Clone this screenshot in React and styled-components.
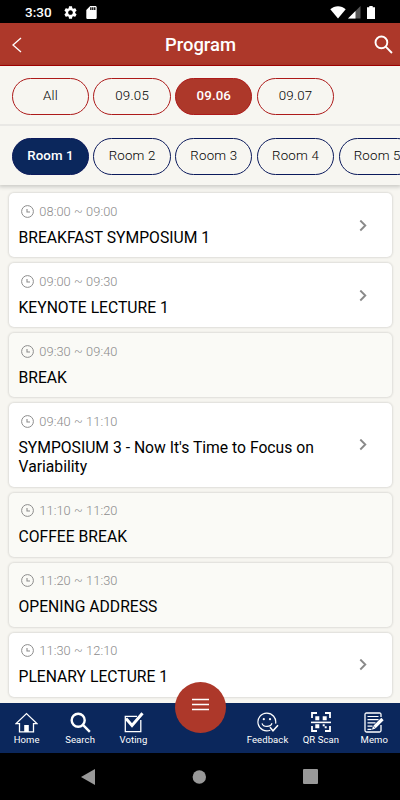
import styled, { createGlobalStyle } from 'styled-components'

const GlobalStyle = createGlobalStyle`
  * {
    box-sizing: border-box;
  }
  body {
    margin: 0;
    background: #000;
    font-family: Roboto, "Liberation Sans", sans-serif;
    overflow: hidden;
  }
  svg {
    display: block;
    flex-shrink: 0;
  }
`;

const Phone = styled.div`
  width: 400px;
  height: 800px;
  display: flex;
  flex-direction: column;
  overflow: hidden;
  background: #f7f6f1;
`;

const StatusBar = styled.div`
  height: 23px;
  flex-shrink: 0;
  display: flex;
  align-items: center;
  padding: 1px 25px 0 25px;
  background: #000;
  color: #fff;
`;

const StatusTime = styled.span`
  width: 38.5px;
  font-size: 13.5px;
  font-weight: 500;
`;

const StatusIcons = styled.div`
  display: flex;
  align-items: center;
  gap: ${({ $gap }) => $gap}px;
`;

const Spacer = styled.div`
  flex: 1;
`;

const Header = styled.header`
  height: 43px;
  flex-shrink: 0;
  display: flex;
  align-items: center;
  justify-content: space-between;
  padding: 0 7px 0 11px;
  background: #ad382a;
  border-bottom: 1px solid #ac0000;
  color: #fff;
`;

const HeaderTitle = styled.h1`
  margin: 0;
  font-size: 18.4px;
  font-weight: 500;
`;

const HeaderSide = styled.div`
  width: ${({ $end }) => ($end ? 26 : 23)}px;
  display: flex;
  justify-content: ${({ $end }) => ($end ? 'flex-end' : 'flex-start')};
  padding-top: 1px;
`;

const Filters = styled.div`
  position: relative;
  flex-shrink: 0;
  box-shadow: 0 1px 4px 1px rgba(0, 0, 0, 0.18);
`;

const FilterRow = styled.div`
  height: ${({ $height }) => $height}px;
  display: flex;
  gap: 4.4px;
  padding: 12px 0 0 11.8px;
  overflow: hidden;
  border-bottom: ${({ $divided }) => ($divided ? '2px solid #e9e8e5' : 'none')};
`;

const Pill = styled.div`
  width: 77.3px;
  height: 37px;
  flex-shrink: 0;
  display: flex;
  align-items: center;
  justify-content: center;
  padding-bottom: 2px;
  border: 1px solid ${({ $line }) => $line};
  border-radius: 19px;
  background: ${({ $active, $fill }) => ($active ? $fill : 'transparent')};
  color: ${({ $active }) => ($active ? '#fff' : '#000')};
  font-size: 13.3px;
  font-weight: ${({ $active }) => ($active ? 500 : 300)};
  letter-spacing: ${({ $active }) => ($active ? 0.1 : 0.2)}px;
`;

const List = styled.main`
  flex: 1;
  min-height: 0;
  display: flex;
  flex-direction: column;
  gap: 6px;
  padding: 8.4px 8px 0 9px;
  overflow: hidden;
`;

const Card = styled.article`
  flex-shrink: 0;
  min-height: 64px;
  display: flex;
  align-items: center;
  justify-content: space-between;
  padding: 10.5px 25px 9.5px 9.5px;
  border-radius: 5px;
  background: ${({ $muted }) => ($muted ? '#fafaf6' : '#fff')};
  box-shadow: 0 0 2px 1px rgba(0, 0, 0, 0.1);
`;

const CardTime = styled.div`
  display: flex;
  align-items: center;
  gap: 5.8px;
  height: 15px;
  padding-left: 2px;
  color: #8c8c8c;
  font-size: 12.8px;
  font-weight: 300;
  letter-spacing: 0.08px;
`;

const CardTitle = styled.div`
  width: 310px;
  margin-top: 9px;
  color: #000;
  font-size: 15.7px;
  font-weight: 400;
  line-height: 19.6px;
`;

const TabBar = styled.nav`
  position: relative;
  height: 50px;
  flex-shrink: 0;
  display: flex;
  justify-content: space-between;
  margin-right: -1px;
  background: #0b275c;
  color: #fff;
`;

const TabGroup = styled.div`
  display: flex;
`;

const Tab = styled.div`
  width: 53.4px;
  display: flex;
  flex-direction: column;
  align-items: center;
  padding-top: 8.5px;
  font-size: 9.5px;
  line-height: 12px;
  letter-spacing: 0.1px;
  white-space: nowrap;
`;

const TabIcon = styled.div`
  height: 22px;
`;

const MenuButton = styled.div`
  position: absolute;
  left: 174.700px;
  top: -21.500px;
  width: 51px;
  height: 51px;
  display: flex;
  align-items: center;
  justify-content: center;
  padding-bottom: 5px;
  border-radius: 50%;
  background: #ad382a;
`;

const SystemBar = styled.div`
  height: 47px;
  flex-shrink: 0;
  display: flex;
  align-items: center;
  justify-content: space-between;
  padding: 0 82px 0 81px;
  background: #000;
`;

const GearIcon = () => (
  <svg width="13" height="13" viewBox="2 2 20 20" fill="#fff">
    <path d="M19.14 12.94c.04-.3.06-.61.06-.94 0-.32-.02-.64-.07-.94l2.03-1.58c.18-.14.23-.41.12-.61l-1.92-3.32c-.12-.22-.37-.29-.59-.22l-2.39.96c-.5-.38-1.03-.7-1.62-.94l-.36-2.54c-.04-.24-.24-.41-.48-.41h-3.84c-.24 0-.43.17-.47.41l-.36 2.54c-.59.24-1.13.57-1.62.94l-2.39-.96c-.22-.08-.47 0-.59.22L2.74 8.87c-.12.21-.08.47.12.61l2.03 1.58c-.05.3-.09.63-.09.94s.02.64.07.94l-2.03 1.58c-.18.14-.23.41-.12.61l1.92 3.32c.12.22.37.29.59.22l2.39-.96c.5.38 1.03.7 1.62.94l.36 2.54c.05.24.24.41.48.41h3.84c.24 0 .44-.17.47-.41l.36-2.54c.59-.24 1.13-.56 1.62-.94l2.39.96c.22.08.47 0 .59-.22l1.92-3.32c.12-.22.07-.47-.12-.61l-2.01-1.58zM12 15.6c-1.98 0-3.6-1.62-3.6-3.6s1.62-3.6 3.6-3.6 3.6 1.62 3.6 3.6-1.62 3.6-3.6 3.6z" />
  </svg>
)

const SdCardIcon = () => (
  <svg width="11" height="13" viewBox="4 2 16 20" fill="#fff">
    <path d="M18 2h-8L4.02 8 4 20c0 1.100.9 2 2 2h12c1.100 0 2-.9 2-2V4c0-1.100-.9-2-2-2zm-6 6h-2V4h2v4zm3 0h-2V4h2v4zm3 0h-2V4h2v4z" />
  </svg>
)

const WifiIcon = () => (
  <svg width="16" height="13" viewBox="0 0 16 13" fill="#fff">
    <path d="M0.300 3.200C4.700-.7 11.300-.7 15.700 3.200L8 12.600Z" />
  </svg>
)

const SignalIcon = () => (
  <svg width="13" height="13" viewBox="0 0 13 13">
    <path d="M12.500 0V12.500H0Z" fill="#555" />
    <path d="M7.500 5V12.500H0Z" fill="#fff" />
  </svg>
)

const BatteryIcon = () => (
  <svg width="8" height="13" viewBox="0 0 8 13" fill="#fff">
    <path d="M2.300 0h3.400v1.300H8V13H0V1.300h2.300Z" />
  </svg>
)

const BackIcon = () => (
  <svg width="12" height="16" viewBox="0 0 12 16" fill="none" stroke="#fff" strokeWidth="1.300">
    <path d="M10 1 2 8l8 7" />
  </svg>
)

const SearchIcon = ({ size, weight }) => (
  <svg width={size} height={size} viewBox="0 0 20 20" fill="none" stroke="#fff" strokeWidth={weight}>
    <circle cx="7.800" cy="7.800" r="6.200" />
    <path d="m12.300 12.300 6.600 6.600" />
  </svg>
)

const ClockIcon = () => (
  <svg width="13" height="13" viewBox="0 0 13 13" fill="none" stroke="#8c8c8c" strokeWidth="1">
    <circle cx="6.500" cy="6.500" r="5.900" />
    <path d="M6 4v3h3" strokeWidth="1.100" />
  </svg>
)

const ChevronIcon = () => (
  <svg width="8" height="12" viewBox="0 0 8 12" fill="none" stroke="#8a8a8a" strokeWidth="1.900">
    <path d="m1.300 .5 5 5-5 5" />
  </svg>
)

const HomeIcon = () => (
  <svg width="23" height="21" viewBox="0 0 23 21" fill="none" stroke="#fff" strokeWidth="1.300">
    <path d="M4.500 11.600H1.100L11.500 1.600 21.900 11.600H18.500V19.800H4.500Z" />
    <path d="M9.200 13h4.600v7H9.200Z" fill="#fff" stroke="none" />
  </svg>
)

const VotingIcon = () => (
  <svg width="21" height="21" viewBox="0 0 21 21" fill="none" stroke="#fff">
    <path d="M14 4.300H2.300V19.600H17.800V8" strokeWidth="1.300" />
    <path d="m3 6.600 6 6.800L19.500 1.300" strokeWidth="3" />
  </svg>
)

const FeedbackIcon = () => (
  <svg width="22" height="21" viewBox="0 0 22 21" fill="none" stroke="#fff" strokeWidth="1.200">
    <path d="M13.300 18.200A8.900 8.900 0 1 1 18.600 11.600" />
    <path d="M5 11.300c1.200 4.200 8.700 4.200 10 0" />
    <path d="m13 15.300 3 3.500 5-5.600" strokeWidth="1.500" />
    <circle cx="6.800" cy="7.200" r="1.100" fill="#fff" stroke="none" />
    <circle cx="13" cy="7.200" r="1.100" fill="#fff" stroke="none" />
  </svg>
)

const QrIcon = () => (
  <svg width="20" height="20" viewBox="0 0 20 20" fill="none" stroke="#fff" strokeWidth="1.800">
    <path d="M1 6V1h5M14 1h5v5M19 14v5h-5M6 19H1v-5" />
    <path d="M0 10.400h20" strokeWidth="1.600" />
    <path d="M4.300 4.200h4v4h-4ZM11.700 4.200h4v4h-4ZM4.300 12.200h4v4h-4ZM11.700 12.200h2v2h-2ZM13.700 14.200h2v2h-2Z" fill="#fff" stroke="none" />
  </svg>
)

const MemoIcon = () => (
  <svg width="20" height="21" viewBox="0 0 20 21" fill="none" stroke="#fff">
    <path d="M17 5V2.500Q17 1 15.500 1H2.500Q1 1 1 2.500V18.500Q1 20 2.500 20H15.500Q17 20 17 18.500V13" strokeWidth="1.300" />
    <path d="M3.500 4.500h11M3.500 7.700h11M3.500 10.900h8M3.500 14.100h5M3.500 17.300h4" strokeWidth="1.200" />
    <path d="m10.500 15 8-8" strokeWidth="3.200" />
    <path d="m8 17.700 1-3.600 2.500 2.500Z" fill="#fff" stroke="none" />
  </svg>
)

const MenuIcon = () => (
  <svg width="17" height="13" viewBox="0 0 17 13" fill="none" stroke="#fff" strokeWidth="1.500">
    <path d="M0 1.500h17M0 6.500h17M0 11.500h17" />
  </svg>
)

const dates = ['All', '09.05', '09.06', '09.07']
const rooms = ['Room 1', 'Room 2', 'Room 3', 'Room 4', 'Room 5']

const sessions = [
  { time: '08:00 ~ 09:00', title: 'BREAKFAST SYMPOSIUM 1', link: true },
  { time: '09:00 ~ 09:30', title: 'KEYNOTE LECTURE 1', link: true },
  { time: '09:30 ~ 09:40', title: 'BREAK' },
  { time: '09:40 ~ 11:10', title: "SYMPOSIUM 3 - Now It's Time to Focus on Variability", link: true },
  { time: '11:10 ~ 11:20', title: 'COFFEE BREAK' },
  { time: '11:20 ~ 11:30', title: 'OPENING ADDRESS' },
  { time: '11:30 ~ 12:10', title: 'PLENARY LECTURE 1', link: true },
]

const leftTabs = [
  { label: 'Home', icon: <HomeIcon /> },
  { label: 'Search', icon: <SearchIcon size={21} weight={2.3} /> },
  { label: 'Voting', icon: <VotingIcon /> },
]

const rightTabs = [
  { label: 'Feedback', icon: <FeedbackIcon /> },
  { label: 'QR Scan', icon: <QrIcon /> },
  { label: 'Memo', icon: <MemoIcon /> },
]

const Tabs = ({ items }) => (
  <TabGroup>
    {items.map(({ label, icon }) => (
      <Tab key={label}>
        <TabIcon>{icon}</TabIcon>
        {label}
      </Tab>
    ))}
  </TabGroup>
)

const App = () => (
  <>
    <GlobalStyle />
    <Phone>
      <StatusBar>
        <StatusTime>3:30</StatusTime>
        <StatusIcons $gap={9}>
          <GearIcon />
          <SdCardIcon />
        </StatusIcons>
        <Spacer />
        <StatusIcons $gap={2}>
          <WifiIcon />
          <SignalIcon />
          <Spacer />
          <Spacer />
          <BatteryIcon />
        </StatusIcons>
      </StatusBar>
      <Header>
        <HeaderSide><BackIcon /></HeaderSide>
        <HeaderTitle>Program</HeaderTitle>
        <HeaderSide $end><SearchIcon size={19} weight={2} /></HeaderSide>
      </Header>
      <Filters>
        <FilterRow $height={60} $divided>
          {dates.map((date) => (
            <Pill key={date} $line="#ad1a1a" $fill="#ad382a" $active={date === '09.06'}>{date}</Pill>
          ))}
        </FilterRow>
        <FilterRow $height={59}>
          {rooms.map((room) => (
            <Pill key={room} $line="#0b1a5c" $fill="#0b275c" $active={room === 'Room 1'}>{room}</Pill>
          ))}
        </FilterRow>
      </Filters>
      <List>
        {sessions.map(({ time, title, link }) => (
          <Card key={time} $muted={!link}>
            <div>
              <CardTime>
                <ClockIcon />
                {time}
              </CardTime>
              <CardTitle>{title}</CardTitle>
            </div>
            {link && <ChevronIcon />}
          </Card>
        ))}
      </List>
      <TabBar>
        <Tabs items={leftTabs} />
        <Tabs items={rightTabs} />
        <MenuButton><MenuIcon /></MenuButton>
      </TabBar>
      <SystemBar>
        <svg width="14" height="16" viewBox="0 0 14 16" fill="#999"><path d="M14 0v16L0 8Z" /></svg>
        <svg width="14" height="14" viewBox="0 0 14 14" fill="#999"><circle cx="7.300" cy="7" r="6.700" /></svg>
        <svg width="15" height="15" viewBox="0 0 15 15" fill="#999"><rect width="15" height="15" rx="1" /></svg>
      </SystemBar>
    </Phone>
  </>
)

export default App
